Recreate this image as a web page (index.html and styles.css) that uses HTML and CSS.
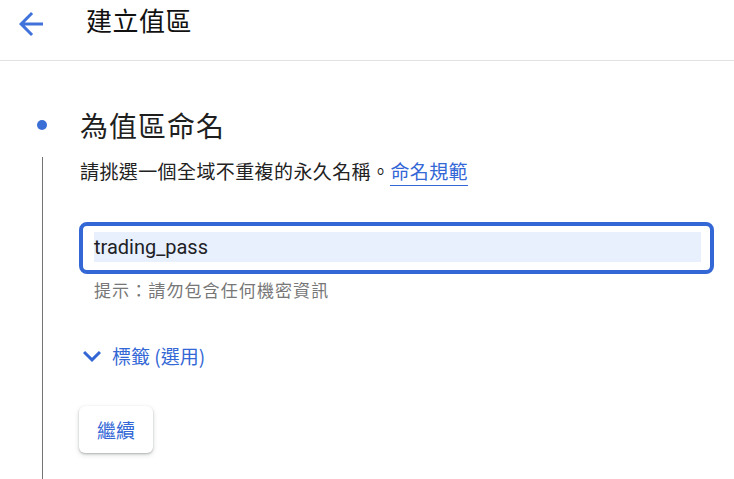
FILE: index.html
```html
<!DOCTYPE html>
<html lang="zh-Hant">
<head>
<meta charset="utf-8">
<title>建立值區</title>
<link rel="stylesheet" href="styles.css">
</head>
<body>
<header class="topbar">
  <svg class="back" viewBox="0 0 24 24" width="36" height="36" aria-hidden="true"><path d="M20 11H7.83l5.59-5.59L12 4l-8 8 8 8 1.41-1.41L7.83 13H20v-2z"/></svg>
  <h1 class="title">建立值區</h1>
</header>
<main class="step">
  <div class="rail-dot"><span class="dot"></span></div>
  <h2 class="step-title">為值區命名</h2>
  <div class="rail-line"></div>
  <div class="step-body">
    <p class="desc">請挑選一個全域不重複的永久名稱。<a class="link" href="#">命名規範</a></p>
    <div class="field">
      <div class="field-fill">trading_pass</div>
    </div>
    <p class="hint">提示：請勿包含任何機密資訊</p>
    <div class="toggle">
      <svg class="chev" viewBox="0 0 24 24" width="36" height="36" aria-hidden="true"><path d="M7.41 8.59 12 13.17l4.59-4.58L18 10l-6 6-6-6 1.41-1.41z"/></svg>
      <span class="toggle-label">標籤 (選用)</span>
    </div>
    <button class="btn" type="button">繼續</button>
  </div>
</main>
</body>
</html>
```
FILE: styles.css
```css
html, body {
  margin: 0;
  padding: 0;
  background: #ffffff;
  font-family: "Noto Sans CJK TC", "Noto Sans", sans-serif;
  color: #202124;
  overflow: hidden;
}
.topbar {
  height: 60px;
  border-bottom: 1px solid #e2e2e2;
  display: flex;
  align-items: flex-start;
  box-sizing: content-box;
}
.back {
  fill: #3f72da;
  margin: 6px 0 0 13px;
  flex: none;
}
.title {
  margin: 3px 0 0 37px;
  font-size: 26px;
  line-height: 34px;
  font-weight: 400;
  letter-spacing: 0.5px;
  color: #111;
}
.step {
  display: grid;
  grid-template-columns: 80px 1fr;
  grid-template-rows: 36px auto;
  row-gap: 14px;
  padding-top: 46px;
}
.rail-dot {
  display: flex;
  align-items: center;
}
.dot {
  width: 10px;
  height: 10px;
  border-radius: 50%;
  background: #3b6fd6;
  margin-left: 37px;
}
.step-title {
  margin: 0;
  font-size: 28px;
  line-height: 36px;
  font-weight: 400;
  letter-spacing: 1px;
  color: #1f1f1f;
}
.rail-line {
  margin-left: 42px;
  width: 1px;
  background: #747474;
  height: 330px;
}
.step-body {
  padding-right: 20px;
}
.desc {
  margin: 0;
  font-size: 19px;
  line-height: 28px;
  letter-spacing: 0.4px;
  color: #222;
}
.link {
  color: #3367d6;
  text-decoration: none;
  border-bottom: 1px solid #3367d6;
  padding-bottom: 1px;
}
.field {
  margin: 37px 0 0 -1px;
  width: 635px;
  height: 52px;
  box-sizing: border-box;
  border: 4px solid #3367d6;
  border-radius: 8px;
  padding: 6px 9px 8px 11px;
}
.field-fill {
  height: 30px;
  background: #e8f0fe;
  font-family: Roboto, "Liberation Sans", sans-serif;
  font-size: 20px;
  line-height: 30px;
  color: #202124;
}
.hint {
  margin: 4px 0 0 14px;
  font-size: 17px;
  line-height: 24px;
  letter-spacing: 1.1px;
  color: #777;
}
.toggle {
  margin-top: 40px;
  display: flex;
  align-items: center;
  height: 28px;
  color: #3367d6;
}
.chev {
  fill: #3367d6;
  margin-left: -6px;
  flex: none;
}
.toggle-label {
  margin-left: 2px;
  font-size: 19px;
  line-height: 28px;
}
.btn {
  margin-top: 36px;
  margin-left: -1px;
  width: 74px;
  height: 47px;
  border: none;
  border-radius: 6px;
  background: #fff;
  box-shadow: 0 1px 2px rgba(60,64,67,0.3), 0 2px 5px rgba(60,64,67,0.18);
  font-family: "Noto Sans CJK TC", "Noto Sans", sans-serif;
  font-size: 19px;
  color: #3367d6;
  padding: 0;
}
```
